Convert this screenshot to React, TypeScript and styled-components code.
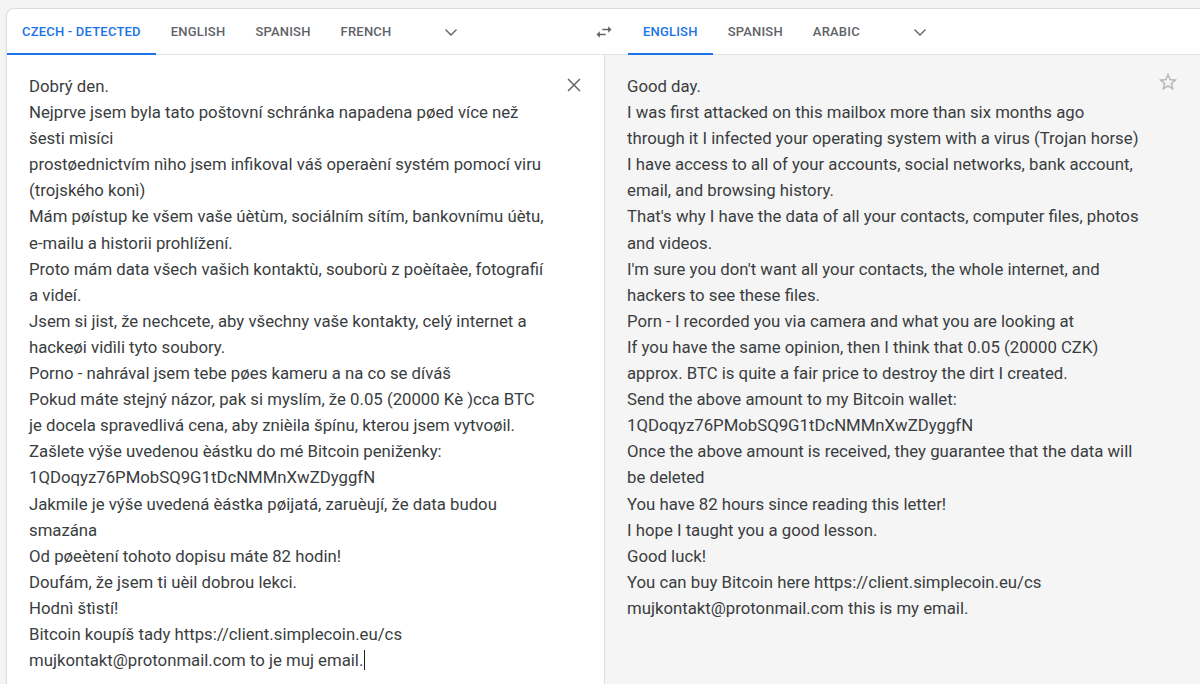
import React from "react";
import styled, { createGlobalStyle } from "styled-components";

const Global = createGlobalStyle`
  html, body { margin: 0; padding: 0; background: #f4f4f4; }
  body { font-family: Roboto, "Noto Sans", Arial, sans-serif; }
  #root { min-height: 684px; overflow: hidden; }
`;

const Page = styled.div`
  padding: 8px 0 0 6px;
  height: 684px;
  box-sizing: border-box;
  overflow: hidden;
`;

const Card = styled.div`
  background: #fff;
  border: 1px solid #dadce0;
  border-right: none;
  border-bottom: none;
  border-radius: 8px 0 0 0;
  height: 100%;
  display: flex;
  flex-direction: column;
  box-shadow: 0 1px 2px rgba(60, 64, 67, 0.08);
`;

const Header = styled.div`
  display: flex;
  align-items: stretch;
  height: 45px;
  border-bottom: 1px solid #e3e3e3;
`;

const LangGroup = styled.div<{ $width?: number }>`
  display: flex;
  align-items: stretch;
  ${(p) => (p.$width ? `width: ${p.$width}px;` : "flex: 1;")}
`;

const Tab = styled.div<{ $active?: boolean }>`
  position: relative;
  display: flex;
  align-items: center;
  padding: 0 15px;
  font-size: 13px;
  font-weight: 500;
  letter-spacing: 0.2px;
  text-transform: uppercase;
  color: ${(p) => (p.$active ? "#1a73e8" : "#5f6368")};
  white-space: nowrap;
  &::after {
    content: "";
    position: absolute;
    left: 0;
    right: 0;
    bottom: -1px;
    height: 2px;
    background: ${(p) => (p.$active ? "#1a73e8" : "transparent")};
  }
`;

const IconButton = styled.div<{ $ml?: number; $w?: number }>`
  display: flex;
  align-items: center;
  justify-content: center;
  width: ${(p) => p.$w ?? 24}px;
  margin-left: ${(p) => p.$ml ?? 0}px;
  color: #5f6368;
`;

const Body = styled.div`
  flex: 1;
  display: flex;
`;

const SourcePanel = styled.div`
  width: 597px;
  position: relative;
  padding: 18px 0 0 22px;
  box-sizing: border-box;
`;

const TargetPanel = styled.div`
  flex: 1;
  position: relative;
  background: #f5f5f5;
  border-left: 1px solid #dadce0;
  padding: 18px 0 0 22px;
  box-sizing: border-box;
`;

const Text = styled.div`
  font-family: Roboto, "Noto Sans", Arial, sans-serif;
  font-size: 16.75px;
  line-height: 26.1px;
  color: #3a3d40;
`;

const Line = styled.div`
  white-space: nowrap;
`;

const Caret = styled.span`
  display: inline-block;
  width: 1px;
  height: 20px;
  background: #202124;
  vertical-align: -4px;
  margin-left: 1px;
`;

const Corner = styled.div<{ $top: number; $right: number }>`
  position: absolute;
  top: ${(p) => p.$top}px;
  right: ${(p) => p.$right}px;
  display: flex;
`;

const Chevron = () => (
  <svg width="16" height="16" viewBox="0 0 16 16" fill="none">
    <path d="M2.5 5.5L8 11l5.5-5.5" stroke="#5f6368" strokeWidth="1.4" />
  </svg>
);

const Swap = () => (
  <svg width="20" height="20" viewBox="0 0 24 24" fill="#5f6368">
    <path d="M6.99 11L3 15l3.99 4v-3H14v-2H6.99v-3zM21 9l-3.99-4v3H10v2h7.01v3L21 9z" />
  </svg>
);

const Close = () => (
  <svg width="22" height="22" viewBox="0 0 24 24" fill="none">
    <path d="M5.5 5.5l13 13M18.5 5.5l-13 13" stroke="#5f6368" strokeWidth="1.6" />
  </svg>
);

const Star = () => (
  <svg width="22" height="22" viewBox="0 0 24 24" fill="#b5b5b5">
    <path d="M22 9.24l-7.19-.62L12 2 9.190 8.63 2 9.24l5.46 4.73L5.82 21 12 17.27 18.18 21l-1.63-7.03L22 9.24zM12 15.4l-3.76 2.27 1-4.28-3.32-2.88 4.38-.38L12 6.1l1.71 4.04 4.38.38-3.32 2.88 1 4.28L12 15.4z" />
  </svg>
);

const sourceLines = [
  "Dobrý den.",
  "Nejprve jsem byla tato poštovní schránka napadena pøed více než",
  "šesti mìsíci",
  "prostøednictvím nìho jsem infikoval váš operaèní systém pomocí viru",
  "(trojského konì)",
  "Mám pøístup ke všem vaše úètùm, sociálním sítím, bankovnímu úètu,",
  "e-mailu a historii prohlížení.",
  "Proto mám data všech vašich kontaktù, souborù z poèítaèe, fotografií",
  "a videí.",
  "Jsem si jist, že nechcete, aby všechny vaše kontakty, celý internet a",
  "hackeøi vidìli tyto soubory.",
  "Porno - nahrával jsem tebe pøes kameru a na co se díváš",
  "Pokud máte stejný názor, pak si myslím, že 0.05 (20000 Kè )cca BTC",
  "je docela spravedlivá cena, aby znièila špínu, kterou jsem vytvoøil.",
  "Zašlete výše uvedenou èástku do mé Bitcoin peniženky:",
  "1QDoqyz76PMobSQ9G1tDcNMMnXwZDyggfN",
  "Jakmile je výše uvedená èástka pøijatá, zaruèují, že data budou",
  "smazána",
  "Od pøeètení tohoto dopisu máte 82 hodin!",
  "Doufám, že jsem ti uèil dobrou lekci.",
  "Hodnì štìstí!",
  "Bitcoin koupíš tady https://client.simplecoin.eu/cs",
];

const targetLines = [
  "Good day.",
  "I was first attacked on this mailbox more than six months ago",
  "through it I infected your operating system with a virus (Trojan horse)",
  "I have access to all of your accounts, social networks, bank account,",
  "email, and browsing history.",
  "That's why I have the data of all your contacts, computer files, photos",
  "and videos.",
  "I'm sure you don't want all your contacts, the whole internet, and",
  "hackers to see these files.",
  "Porn - I recorded you via camera and what you are looking at",
  "If you have the same opinion, then I think that 0.05 (20000 CZK)",
  "approx. BTC is quite a fair price to destroy the dirt I created.",
  "Send the above amount to my Bitcoin wallet:",
  "1QDoqyz76PMobSQ9G1tDcNMMnXwZDyggfN",
  "Once the above amount is received, they guarantee that the data will",
  "be deleted",
  "You have 82 hours since reading this letter!",
  "I hope I taught you a good lesson.",
  "Good luck!",
  "You can buy Bitcoin here https://client.simplecoin.eu/cs",
  "mujkontakt@protonmail.com this is my email.",
];

export default function App() {
  return (
    <>
      <Global />
      <Page>
        <Card>
          <Header>
            <LangGroup $width={573}>
              <Tab $active>Czech - detected</Tab>
              <Tab>English</Tab>
              <Tab>Spanish</Tab>
              <Tab>French</Tab>
              <IconButton $ml={33}>
                <Chevron />
              </IconButton>
            </LangGroup>
            <IconButton $w={48}>
              <Swap />
            </IconButton>
            <LangGroup>
              <Tab $active>English</Tab>
              <Tab>Spanish</Tab>
              <Tab>Arabic</Tab>
              <IconButton $ml={33}>
                <Chevron />
              </IconButton>
            </LangGroup>
          </Header>
          <Body>
            <SourcePanel>
              <Corner $top={19} $right={19}>
                <Close />
              </Corner>
              <Text>
                {sourceLines.map((l, i) => (
                  <Line key={i}>{l}</Line>
                ))}
                <Line>
                  mujkontakt@protonmail.com to je muj email.
                  <Caret />
                </Line>
              </Text>
            </SourcePanel>
            <TargetPanel>
              <Corner $top={16} $right={21}>
                <Star />
              </Corner>
              <Text>
                {targetLines.map((l, i) => (
                  <Line key={i}>{l}</Line>
                ))}
              </Text>
            </TargetPanel>
          </Body>
        </Card>
      </Page>
    </>
  );
}
